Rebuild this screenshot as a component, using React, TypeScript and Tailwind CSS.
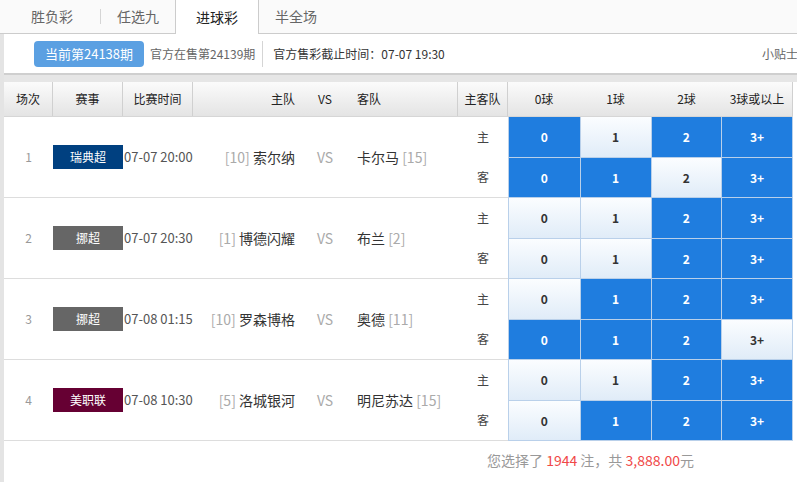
import React from "react";

type Match = {
  no: number;
  league: string;
  color: string;
  time: string;
  homeRank: string;
  home: string;
  away: string;
  awayRank: string;
  picks: [boolean[], boolean[]];
};

const matches: Match[] = [
  {
    no: 1,
    league: "瑞典超",
    color: "bg-[#004080]",
    time: "07-07 20:00",
    homeRank: "[10]",
    home: "索尔纳",
    away: "卡尔马",
    awayRank: "[15]",
    picks: [
      [true, false, true, true],
      [true, true, false, true],
    ],
  },
  {
    no: 2,
    league: "挪超",
    color: "bg-[#666666]",
    time: "07-07 20:30",
    homeRank: "[1]",
    home: "博德闪耀",
    away: "布兰",
    awayRank: "[2]",
    picks: [
      [false, false, true, true],
      [false, false, true, true],
    ],
  },
  {
    no: 3,
    league: "挪超",
    color: "bg-[#666666]",
    time: "07-08 01:15",
    homeRank: "[10]",
    home: "罗森博格",
    away: "奥德",
    awayRank: "[11]",
    picks: [
      [false, true, true, true],
      [true, true, true, false],
    ],
  },
  {
    no: 4,
    league: "美职联",
    color: "bg-[#660033]",
    time: "07-08 10:30",
    homeRank: "[5]",
    home: "洛城银河",
    away: "明尼苏达",
    awayRank: "[15]",
    picks: [
      [false, false, true, true],
      [false, true, true, true],
    ],
  },
];

const labels = ["0", "1", "2", "3+"];
const widths = ["w-[72px]", "w-[71px]", "w-[71px]", "w-[71px]"];

const Cell = ({ on, label, w }: { on: boolean; label: string; w: string }) => (
  <div
    className={`${w} h-full flex items-center justify-center text-[12px] font-bold border-l border-b border-[#b9d0ea] ${
      on ? "bg-[#1f7ddf] text-white" : "bg-gradient-to-b from-[#fbfdff] to-[#e0ecf8] text-[#333]"
    }`}
  >
    {label}
  </div>
);

export default function App() {
  return (
    <div
      className="w-[797px] h-[482px] bg-white overflow-hidden flex flex-col text-[#333]"
      style={{ fontFamily: '"Noto Sans CJK SC", "Noto Sans", sans-serif' }}
    >
      {/* tabs */}
      <div className="h-[34px] shrink-0 flex bg-[#fafafa] border-b border-[#cccccc] pl-[4px] text-[14px]">
        <div className="w-[96px] flex items-center justify-center text-[#666]">胜负彩</div>
        <div className="w-px h-[15px] self-center bg-[#d5d5d5]" />
        <div className="w-[74px] flex items-center justify-center text-[#666]">任选九</div>
        <div className="w-[84px] h-[34px] flex items-center justify-center bg-white border-x border-[#cccccc] text-[#222]">
          进球彩
        </div>
        <div className="w-[74px] flex items-center justify-center text-[#666]">半全场</div>
      </div>

      <div className="flex flex-1">
        <div className="w-[4px] bg-[#e4e4e4] shrink-0" />
        <div className="flex-1 flex flex-col">
          {/* info bar */}
          <div className="h-[39px] shrink-0 flex items-center text-[12px] overflow-hidden">
            <div className="ml-[30px] w-[110px] h-[26px] rounded-[4px] bg-[#5ba0e2] text-white text-[13px] flex items-center justify-center">
              当前第24138期
            </div>
            <div className="ml-[6px] text-[#666]">官方在售第24139期</div>
            <div className="ml-[7px] w-px h-[26px] bg-[#d5d5d5]" />
            <div className="ml-[10px] text-[#333]">官方售彩截止时间：07-07 19:30</div>
            <div className="ml-auto mr-[-1px] text-[#666] whitespace-nowrap">小贴士</div>
          </div>
          <div className="h-[2px] bg-[#cfcfcf]" />
          <div className="h-[7px] bg-[#e6e6e6]" />

          {/* header */}
          <div className="h-[35px] w-[789px] flex bg-gradient-to-b from-[#fbfbfb] to-[#e4e4e4] border-b border-[#d6d6d6] text-[12px] text-[#222]">
            <div className="w-[49px] flex items-center justify-center border-r border-[#d0d0d0]">场次</div>
            <div className="w-[70px] flex items-center justify-center border-r border-[#d0d0d0]">赛事</div>
            <div className="w-[70px] flex items-center justify-center border-r border-[#d0d0d0]">比赛时间</div>
            <div className="w-[265px] flex items-center border-r border-[#d0d0d0]">
              <div className="w-[112px] text-right pr-[10px]">主队</div>
              <div className="w-[40px] text-center">VS</div>
              <div className="pl-[12px]">客队</div>
            </div>
            <div className="w-[50px] flex items-center justify-center border-r border-[#d0d0d0]">主客队</div>
            <div className="w-[72px] flex items-center justify-center">0球</div>
            <div className="w-[71px] flex items-center justify-center">1球</div>
            <div className="w-[71px] flex items-center justify-center">2球</div>
            <div className="w-[71px] flex items-center justify-center border-r border-[#d0d0d0]">3球或以上</div>
          </div>

          {/* rows */}
          {matches.map((m) => (
            <div key={m.no} className="h-[81px] w-[789px] flex">
              <div className="w-[504px] flex items-center border-b border-[#dddddd]">
                <div className="w-[49px] text-center text-[12px] text-[#999]">{m.no}</div>
                <div
                  className={`w-[70px] h-[24px] ${m.color} text-white text-[12px] flex items-center justify-center`}
                >
                  {m.league}
                </div>
                <div className="w-[70px] pl-[1px] text-[13px] text-[#555] whitespace-nowrap">{m.time}</div>
                <div className="w-[265px] flex items-center text-[14px]">
                  <div className="w-[112px] text-right pr-[10px] whitespace-nowrap">
                    <span className="text-[#aaa]">{m.homeRank}</span> {m.home}
                  </div>
                  <div className="w-[40px] text-center text-[#aaa]">VS</div>
                  <div className="pl-[12px] whitespace-nowrap">
                    {m.away} <span className="text-[#aaa]">{m.awayRank}</span>
                  </div>
                </div>
                <div className="w-[50px] h-full flex flex-col text-[12px] text-[#444]">
                  <div className="h-[41px] flex items-center justify-center">主</div>
                  <div className="h-[40px] flex items-center justify-center">客</div>
                </div>
              </div>
              <div className="w-[285px] flex flex-col border-r border-[#b9d0ea]">
                {m.picks.map((row, ri) => (
                  <div key={ri} className={`${ri === 0 ? "h-[41px]" : "h-[40px]"} flex`}>
                    {row.map((on, ci) => (
                      <Cell key={ci} on={on} label={labels[ci]} w={widths[ci]} />
                    ))}
                  </div>
                ))}
              </div>
            </div>
          ))}

          {/* footer */}
          <div className="flex-1 flex items-center pl-[483px] pb-[2px] text-[14px] text-[#999]">
            您选择了&nbsp;<span className="text-[#f04848]">1944</span>&nbsp;注，共&nbsp;
            <span className="text-[#f04848]">3,888.00</span>元
          </div>
        </div>
      </div>
    </div>
  );
}
